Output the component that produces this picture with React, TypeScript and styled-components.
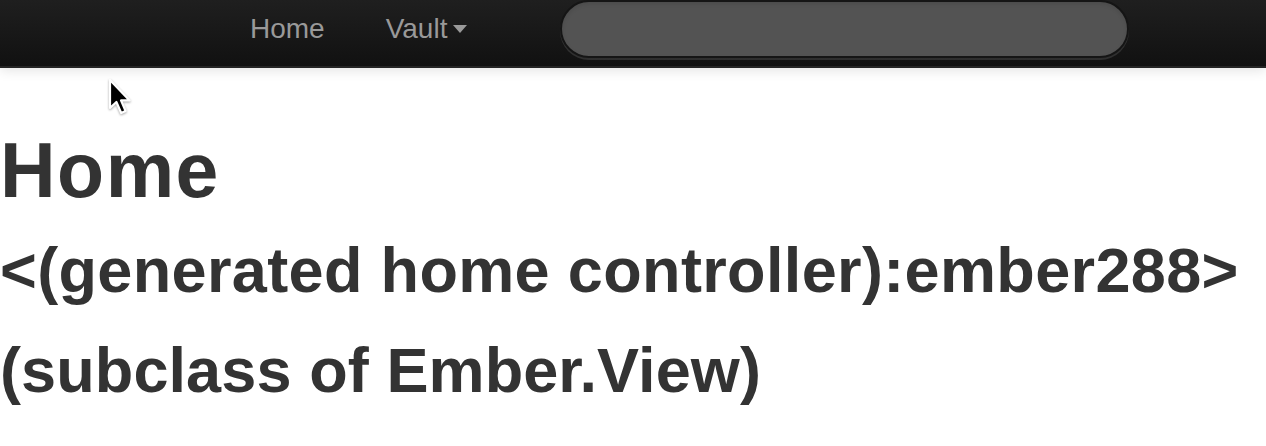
import React from "react";
import styled, { createGlobalStyle } from "styled-components";

const GlobalStyle = createGlobalStyle`
  html, body {
    margin: 0;
    padding: 0;
    background: #ffffff;
    font-family: "Liberation Sans", Arial, Helvetica, sans-serif;
    color: #333333;
    overflow: hidden;
  }
  #root { position: relative; }
`;

const Page = styled.div`
  position: relative;
  width: 1266px;
  height: 446px;
  overflow: hidden;
  background: #ffffff;
`;

const NavBar = styled.header`
  height: 68px;
  box-sizing: border-box;
  background: linear-gradient(to bottom, #1f1f1f 0%, #111111 100%);
  border-bottom: 2px solid #252525;
  box-shadow: 0 2px 12px rgba(0, 0, 0, 0.12);
  display: flex;
  align-items: flex-start;
  padding-left: 220px;
`;

const NavList = styled.ul`
  list-style: none;
  margin: 0;
  padding: 0;
  display: flex;
`;

const NavLink = styled.a<{ $gap?: number }>`
  display: block;
  padding: 9px 30px 19px ${(p) => 30 + (p.$gap ?? 0)}px;
  font-size: 28px;
  line-height: 40px;
  color: #999999;
  text-decoration: none;
  cursor: pointer;
`;

const Caret = styled.span`
  display: inline-block;
  width: 0;
  height: 0;
  vertical-align: top;
  margin-top: 16px;
  margin-left: 6px;
  border-top: 8px solid #999999;
  border-left: 7px solid transparent;
  border-right: 7px solid transparent;
`;

const SearchForm = styled.form`
  margin: 0 0 0 63px;
  padding-top: 0;
`;

const SearchInput = styled.input`
  box-sizing: border-box;
  width: 569px;
  height: 58px;
  margin: 0;
  padding: 8px 28px;
  border-radius: 30px;
  border: 2px solid #151515;
  background: #535353;
  color: #ffffff;
  font-family: inherit;
  font-size: 26px;
  outline: none;
  box-shadow: inset 0 2px 4px rgba(0, 0, 0, 0.1),
    0 2px 0 rgba(255, 255, 255, 0.12);
`;

const Main = styled.main`
  padding-top: 42px;
`;

const Heading = styled.h1<{ $size: number; $track: number }>`
  margin: 20px 0;
  font-size: ${(p) => p.$size}px;
  line-height: 80px;
  font-weight: bold;
  color: #333333;
  white-space: nowrap;
  letter-spacing: ${(p) => p.$track}px;
`;

const Cursor = styled.svg`
  position: absolute;
  left: 106px;
  top: 78px;
  width: 26px;
  height: 38px;
  pointer-events: none;
  filter: drop-shadow(0 1px 1px rgba(0, 0, 0, 0.35));
`;

export default function App() {
  return (
    <Page>
      <GlobalStyle />
      <NavBar>
        <NavList>
          <li>
            <NavLink>Home</NavLink>
          </li>
          <li>
            <NavLink $gap={1}>
              Vault
              <Caret />
            </NavLink>
          </li>
        </NavList>
        <SearchForm onSubmit={(e) => e.preventDefault()}>
          <SearchInput type="text" aria-label="Search" />
        </SearchForm>
      </NavBar>
      <Main>
        <Heading $size={77} $track={1.5}>
          Home
        </Heading>
        <Heading as="h2" $size={63} $track={0.35}>
          &lt;(generated home controller):ember288&gt;
        </Heading>
        <Heading as="h2" $size={63} $track={0.1}>
          (subclass of Ember.View)
        </Heading>
      </Main>
      <Cursor viewBox="0 0 13 19">
        <path
          d="M2 1 L2 15 L5.2 12 L7.6 17.5 L9.8 16.5 L7.5 11.2 L11.8 11.2 Z"
          fill="#000000"
          stroke="#ffffff"
          strokeWidth="1.1"
          strokeLinejoin="round"
        />
      </Cursor>
    </Page>
  );
}
